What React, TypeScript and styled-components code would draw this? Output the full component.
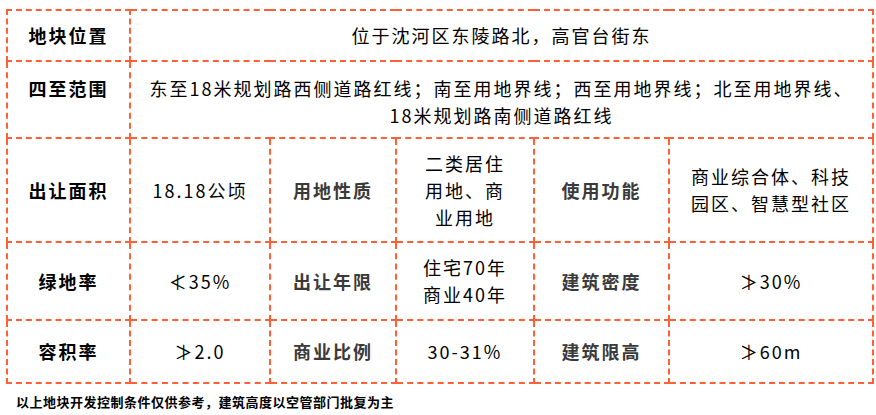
import styled, { createGlobalStyle } from 'styled-components';

const GlobalStyle = createGlobalStyle`
  html, body {
    margin: 0;
    background: #ffffff;
  }
  body {
    font-family: "Noto Sans CJK SC", "Noto Sans", sans-serif;
  }
`;

const ORANGE = '#ff6038';

const Page = styled.div`
  width: 876px;
  height: 415px;
  box-sizing: border-box;
  padding: 9px 0 0 6px;
`;

const Table = styled.table`
  width: 866px;
  table-layout: fixed;
  border-collapse: collapse;
`;

const Col = styled.col<{ $w: number }>`
  width: ${(p) => p.$w}px;
`;

const Row = styled.tr<{ $h: number }>`
  height: ${(p) => p.$h}px;
`;

const Cell = styled.td<{ $top?: boolean; $narrow?: boolean }>`
  border: 2px dashed ${ORANGE};
  padding: ${(p) => (p.$top ? '13px' : '0')} ${(p) => (p.$narrow ? '22px' : '14px')} 0;
  text-align: center;
  vertical-align: ${(p) => (p.$top ? 'top' : 'middle')};
  font-size: 18px;
  line-height: 27px;
  letter-spacing: 2px;
  color: #000;
`;

const Label = styled(Cell)<{ $dim?: boolean }>`
  font-weight: 700;
  color: ${(p) => (p.$dim ? '#3a3a3a' : '#000')};
`;

const Note = styled.p`
  margin: 8px 0 0 10px;
  font-size: 13px;
  line-height: 20px;
  letter-spacing: 0.5px;
  font-weight: 700;
  color: #000;
`;

const widths = [123, 140, 126, 138, 135, 204];

export default function App() {
  return (
    <>
      <GlobalStyle />
      <Page>
        <Table>
          <colgroup>
            {widths.map((w, i) => (
              <Col key={i} $w={w} />
            ))}
          </colgroup>
          <tbody>
            <Row $h={51}>
              <Label>地块位置</Label>
              <Cell colSpan={5}>位于沈河区东陵路北，高官台街东</Cell>
            </Row>
            <Row $h={77}>
              <Label $top>四至范围</Label>
              <Cell $top colSpan={5}>
                东至18米规划路西侧道路红线；南至用地界线；西至用地界线；北至用地界线、18米规划路南侧道路红线
              </Cell>
            </Row>
            <Row $h={104}>
              <Label>出让面积</Label>
              <Cell>18.18公顷</Cell>
              <Label $dim>用地性质</Label>
              <Cell $narrow>二类居住用地、商业用地</Cell>
              <Label $dim>使用功能</Label>
              <Cell>商业综合体、科技园区、智慧型社区</Cell>
            </Row>
            <Row $h={78}>
              <Label>绿地率</Label>
              <Cell>≮35%</Cell>
              <Label $dim>出让年限</Label>
              <Cell $narrow>
                住宅70年
                <br />
                商业40年
              </Cell>
              <Label $dim>建筑密度</Label>
              <Cell>≯30%</Cell>
            </Row>
            <Row $h={63}>
              <Label>容积率</Label>
              <Cell>≯2.0</Cell>
              <Label $dim>商业比例</Label>
              <Cell>30-31%</Cell>
              <Label $dim>建筑限高</Label>
              <Cell>≯60m</Cell>
            </Row>
          </tbody>
        </Table>
        <Note>以上地块开发控制条件仅供参考，建筑高度以空管部门批复为主</Note>
      </Page>
    </>
  );
}
